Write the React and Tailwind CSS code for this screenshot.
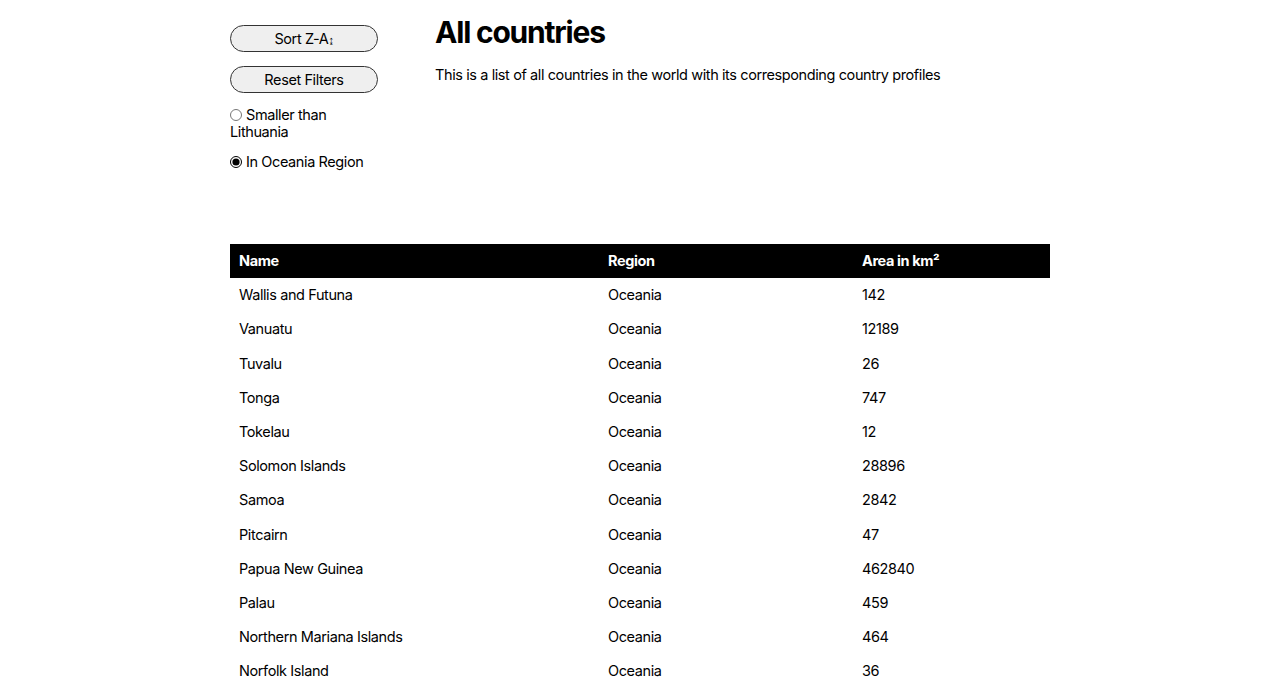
import React from "react";

const rows = [
  ["Wallis and Futuna", "Oceania", "142"],
  ["Vanuatu", "Oceania", "12189"],
  ["Tuvalu", "Oceania", "26"],
  ["Tonga", "Oceania", "747"],
  ["Tokelau", "Oceania", "12"],
  ["Solomon Islands", "Oceania", "28896"],
  ["Samoa", "Oceania", "2842"],
  ["Pitcairn", "Oceania", "47"],
  ["Papua New Guinea", "Oceania", "462840"],
  ["Palau", "Oceania", "459"],
  ["Northern Mariana Islands", "Oceania", "464"],
  ["Norfolk Island", "Oceania", "36"],
];

export default function App() {
  return (
    <div className="min-h-screen bg-white text-black font-['Inter',sans-serif] text-[14.5px] tracking-[-0.4px]">
      <div className="w-[820px] mx-auto pt-[25px]">
        {/* Filters + heading */}
        <div className="flex">
          <div className="w-[148px] shrink-0 flex flex-col">
            <button className="h-[27px] w-full rounded-full border border-[#333] bg-[#efefef]">
              Sort Z-A<span className="text-[11px]">↨</span>
            </button>
            <button className="h-[27px] w-full rounded-full border border-[#333] bg-[#efefef] mt-[14px]">
              Reset Filters
            </button>
            <label className="mt-[13px] leading-[17px]">
              <input type="radio" name="f" className="w-[12px] h-[12px] mr-[4px] align-[-1px]" />
              Smaller than Lithuania
            </label>
            <label className="mt-[13px] leading-[17px]">
              <input type="radio" name="f" defaultChecked className="w-[12px] h-[12px] mr-[4px] align-[-1px] accent-black" />
              In Oceania Region
            </label>
          </div>
          <div className="ml-[57px] -mt-[15px]">
            <h1 className="text-[30px] font-bold leading-[44px] tracking-[-1.2px]">All countries</h1>
            <p className="mt-[10px] leading-[22px]">This is a list of all countries in the world with its corresponding country profiles</p>
          </div>
        </div>

        {/* Table */}
        <table className="w-full mt-[74px] border-collapse">
          <thead>
            <tr className="bg-black text-white text-left h-[34px]">
              <th className="w-[369px] pl-[9px] font-bold">Name</th>
              <th className="w-[254px] pl-[9px] font-bold">Region</th>
              <th className="pl-[9px] font-bold">Area in km²</th>
            </tr>
          </thead>
          <tbody>
            {rows.map((r) => (
              <tr key={r[0]} className="h-[34.2px]">
                <td className="pl-[9px]">{r[0]}</td>
                <td className="pl-[9px]">{r[1]}</td>
                <td className="pl-[9px]">{r[2]}</td>
              </tr>
            ))}
          </tbody>
        </table>
      </div>
    </div>
  );
}
